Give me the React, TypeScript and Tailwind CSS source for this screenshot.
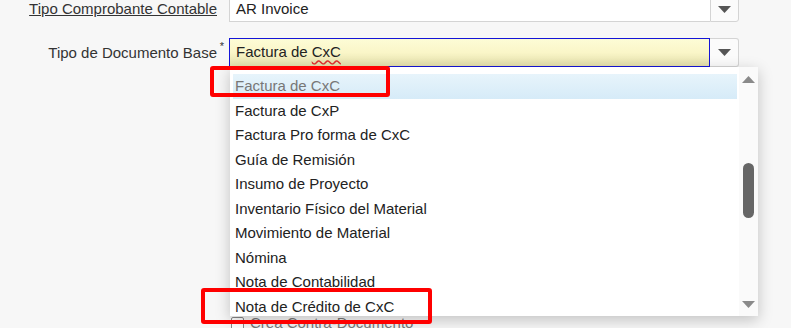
import React from "react";

const items = [
    "Factura de CxC",
    "Factura de CxP",
    "Factura Pro forma de CxC",
    "Guía de Remisión",
    "Insumo de Proyecto",
    "Inventario Físico del Material",
    "Movimiento de Material",
    "Nómina",
    "Nota de Contabilidad",
    "Nota de Crédito de CxC",
];

function Caret({ up = false, color = "#555" }: { up?: boolean; color?: string }) {
    return (
        <svg width="13" height="7" viewBox="0 0 13 7">
            <path d={up ? "M0 7 L6.5 0 L13 7 Z" : "M0 0 L13 0 L6.5 7 Z"} fill={color} />
        </svg>
    );
}

export default function App() {
    return (
        <div
            className="w-[791px] h-[328px] overflow-hidden bg-[#f7f7f7] relative text-[15px] text-[#222]"
            style={{ fontFamily: '"Liberation Sans", Arial, sans-serif' }}
        >
            <div className="flex flex-col gap-[16px] -mt-[8px]">
                {/* row 1 */}
                <div className="flex items-center">
                    <div className="w-[217px] text-right text-[#333] underline pt-[4px]">Tipo Comprobante Contable</div>
                    <div className="ml-[12px] flex h-[30px] w-[510px]">
                        <div className="flex-1 flex items-center px-[6px] pt-[4px] bg-white border border-[#d4d4d4] border-r-0">AR Invoice</div>
                        <div className="w-[29px] flex items-center justify-center pt-[4px] bg-[#fbfbfb] border border-[#d4d4d4] rounded-br-[3px]">
                            <Caret />
                        </div>
                    </div>
                </div>

                {/* row 2 */}
                <div className="flex items-center">
                    <div className="w-[217px] text-right text-[#333] relative pt-[2px]">
                        Tipo de Documento Base
                        <span className="absolute -right-[7px] -top-[2px] text-[11px]">*</span>
                    </div>
                    <div className="ml-[12px] relative">
                        <div className="flex h-[29px] w-[510px]">
                            <div className="flex-1 flex items-center px-[6px] border border-[#1515d8] bg-gradient-to-b from-[#fdfcd6] via-[#faf6c8] to-[#e4e0ac]">
                                Factura de <span className="ml-[4px] underline decoration-wavy decoration-[#e03030] underline-offset-2">CxC</span>
                            </div>
                            <div className="w-[29px] flex items-center justify-center bg-[#fbfbfb] border border-[#d4d4d4] border-l-0 rounded-tr-[3px] rounded-br-[3px]">
                                <Caret />
                            </div>
                        </div>

                        {/* dropdown list */}
                        <div className="absolute left-[1px] top-[29px] z-10 w-[528px] h-[249px] bg-white flex shadow-[0_4px_14px_rgba(0,0,0,0.22)]">
                            <div className="flex-1 pt-[7px] pl-[3px] pr-[2px]">
                                {items.map((it, i) => (
                                    <div
                                        key={it}
                                        className={
                                            "h-[24.5px] flex items-center px-[2px] " +
                                            (i === 0 ? "bg-gradient-to-b from-[#e7f4fb] to-[#d6ebf8] text-[#777]" : "text-[#222]")
                                        }
                                    >
                                        {it}
                                    </div>
                                ))}
                            </div>
                            <div className="w-[19px] bg-[#fafafa] flex flex-col items-center pt-[9px] pb-[8px]">
                                <Caret up color="#8a8a8a" />
                                <div className="mt-[80px] w-[11px] h-[55px] rounded-full bg-[#666]" />
                                <div className="flex-1" />
                                <Caret color="#8a8a8a" />
                            </div>
                        </div>
                    </div>
                </div>

                {/* row 3, mostly hidden by the list */}
                <div className="flex items-center mt-[229px]">
                    <div className="w-[217px]" />
                    <div className="ml-[14px] flex items-center gap-[6px] text-[#777]">
                        <div className="w-[13px] h-[13px] border border-[#888] rounded-[2px] bg-white" />
                        <span>Crea Contra-Documento</span>
                    </div>
                </div>
            </div>

            {/* annotation boxes */}
            <div className="absolute left-[210px] top-[66px] w-[180px] h-[31px] border-[4px] border-[#ff0000] rounded-[3px] z-20" />
            <div className="absolute left-[201px] top-[288px] w-[231px] h-[36px] border-[4px] border-[#ff0000] rounded-[3px] z-20" />
        </div>
    );
}
